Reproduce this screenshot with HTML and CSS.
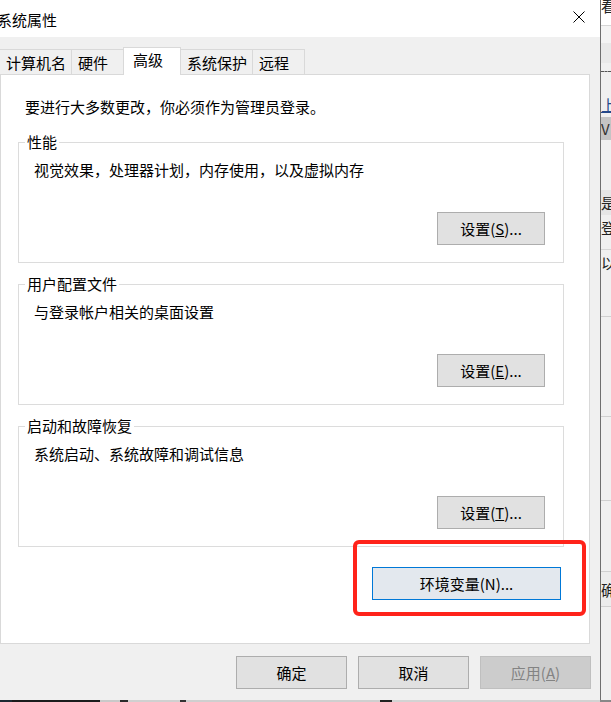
FILE: index.html
```html
<!DOCTYPE html>
<html lang="zh-CN">
<head>
    <meta charset="UTF-8">
    <meta name="viewport" content="width=device-width, initial-scale=1.0">
    <title>系统属性</title>
    <link rel="stylesheet" href="styles.css">
</head>
<body>
    <div class="screen">
        <div class="desktop">
            <div class="window">
                <!-- 标题栏 -->
                <div class="titlebar">
                    <span class="title">系统属性</span>
                    <svg class="close" viewBox="0 0 12 12" width="12" height="12">
                        <path d="M0.5 0.5 L11.5 11.5 M11.5 0.5 L0.5 11.5" stroke="#000" stroke-width="1" fill="none"/>
                    </svg>
                </div>

                <div class="dialog">
                    <!-- 选项卡 -->
                    <div class="tabs">
                        <div class="tab">计算机名</div>
                        <div class="tab">硬件</div>
                        <div class="tab active">高级</div>
                        <div class="tab">系统保护</div>
                        <div class="tab">远程</div>
                    </div>

                    <div class="panel">
                        <p class="intro">要进行大多数更改，你必须作为管理员登录。</p>

                        <fieldset class="group">
                            <legend>性能</legend>
                            <p class="desc">视觉效果，处理器计划，内存使用，以及虚拟内存</p>
                            <div class="group-actions">
                                <button class="btn">设置(<u>S</u>)...</button>
                            </div>
                        </fieldset>

                        <fieldset class="group">
                            <legend>用户配置文件</legend>
                            <p class="desc">与登录帐户相关的桌面设置</p>
                            <div class="group-actions">
                                <button class="btn">设置(<u>E</u>)...</button>
                            </div>
                        </fieldset>

                        <fieldset class="group">
                            <legend>启动和故障恢复</legend>
                            <p class="desc">系统启动、系统故障和调试信息</p>
                            <div class="group-actions">
                                <button class="btn">设置(<u>T</u>)...</button>
                            </div>
                        </fieldset>

                        <button class="btn btn-env">环境变量(N)...</button>
                    </div>

                    <!-- 底部按钮 -->
                    <div class="footer">
                        <button class="btn btn-wide">确定</button>
                        <button class="btn btn-wide">取消</button>
                        <button class="btn btn-wide btn-disabled">应用(<u>A</u>)</button>
                    </div>
                </div>

                <!-- 红色标注框 -->
                <div class="mark"></div>
            </div>

            <!-- 右侧露出的背景窗口 -->
            <div class="side">
                <div class="s-top">看</div>
                <div class="s-light"></div>
                <div class="s-grey"></div>
                <div class="s-dash"></div>
                <div class="s-link"><span>上</span></div>
                <div class="s-band">V</div>
                <div class="s-gap"></div>
                <div class="s-row s-shade">是</div>
                <div class="s-row s-line">登</div>
                <div class="s-row">以</div>
                <div class="s-gap2"></div>
                <div class="s-rule"></div>
                <div class="s-gap3"></div>
                <div class="s-rule"></div>
                <div class="s-gap4"></div>
                <div class="s-rule"></div>
                <div class="s-gap5"></div>
                <div class="s-row s-ok">确</div>
            </div>
        </div>
        <div class="taskbar"></div>
    </div>
</body>
</html>
```

FILE: styles.css
```css
* {
    box-sizing: border-box;
}

body {
    margin: 0;
    font-family: "Noto Sans CJK SC", "Noto Sans", sans-serif;
    font-size: 15px;
    line-height: 20px;
    color: #000;
    overflow: hidden;
}

p {
    margin: 0;
}

.screen {
    width: 611px;
    height: 702px;
    display: flex;
    flex-direction: column;
}

.desktop {
    display: flex;
    height: 700px;
}

.window {
    position: relative;
    width: 601px;
    height: 700px;
    background-color: #f0f0f0;
    border-right: 1px solid #6f6f6f;
    display: flex;
    flex-direction: column;
}

.titlebar {
    height: 37px;
    background-color: #fff;
    display: flex;
    justify-content: space-between;
    align-items: flex-start;
    padding-top: 10px;
}

.title {
    margin-left: -3px;
}

.close {
    margin: 1px 15px 0 0;
}

.dialog {
    padding-top: 10px;
    display: flex;
    flex-direction: column;
}

/* 选项卡 */
.tabs {
    display: flex;
    align-items: flex-end;
    height: 27px;
}

.tab {
    height: 25px;
    min-width: 52px;
    padding: 3px 5px 0 6px;
    background-color: #f0f0f0;
    border-top: 1px solid #d9d9d9;
    border-right: 1px solid #d9d9d9;
}

.tab.active {
    position: relative;
    z-index: 1;
    height: 28px;
    min-width: 58px;
    margin: 0 0 -1px -1px;
    padding: 2px 0 0 9px;
    background-color: #fff;
    border-left: 1px solid #d9d9d9;
}

.panel {
    width: 590px;
    height: 570px;
    background-color: #fff;
    border: 1px solid #d9d9d9;
    padding: 22px 25px 0 17px;
    display: flex;
    flex-direction: column;
}

.intro {
    margin-left: 7px;
}

/* 分组框 */
.group {
    margin: 15px 0 0;
    padding: 8px 18px 17px 0;
    border: 1px solid #dcdcdc;
    min-width: 0;
}

.group + .group {
    margin-top: 11px;
}

.group legend {
    margin-left: 6px;
    padding: 0 2px;
    line-height: 20px;
}

.desc {
    margin-left: 15px;
}

.group-actions {
    display: flex;
    justify-content: flex-end;
    margin-top: 32px;
}

.btn {
    width: 108px;
    height: 33px;
    padding: 0;
    font-family: inherit;
    font-size: 15px;
    line-height: 20px;
    color: #000;
    background-color: #e1e1e1;
    border: 1px solid #adadad;
}

.btn-env {
    width: 189px;
    align-self: flex-end;
    margin: 20px 3px 0 0;
    background-color: #e3e8ee;
    border-color: #0078d7;
}

.footer {
    display: flex;
    justify-content: flex-end;
    gap: 11px;
    padding: 12px 9px 0 0;
}

.btn-wide {
    width: 111px;
}

.btn-disabled {
    color: #838383;
    background-color: #cccccc;
    border-color: #bfbfbf;
}

/* 红色标注 */
.mark {
    position: absolute;
    left: 353px;
    top: 540px;
    width: 233px;
    height: 76px;
    border: 4px solid #ff231a;
    border-radius: 6px;
}

/* 右侧背景窗口 */
.side {
    width: 10px;
    background-color: #f0f0f0;
    display: flex;
    flex-direction: column;
    overflow: hidden;
    white-space: nowrap;
    color: #222;
}

.s-top {
    height: 26px;
    background-color: #fff;
    line-height: 12px;
    border-bottom: 1px solid #d6d6d6;
}

.s-light {
    height: 17px;
    background-color: #f4f4f4;
}

.s-grey {
    height: 20px;
    background-color: #e9e9e9;
}

.s-dash {
    height: 9px;
    border-bottom: 1px dashed #555;
}

.s-link {
    height: 43px;
    display: flex;
    align-items: flex-end;
    color: #24488a;
}

.s-link span {
    text-decoration: underline;
}

.s-band {
    height: 23px;
    margin-top: 2px;
    background-color: #c4c4c4;
    color: #333;
    line-height: 23px;
}

.s-gap {
    height: 50px;
}

.s-row {
    height: 25px;
    line-height: 25px;
}

.s-shade {
    background-color: #e6e6e6;
}

.s-line {
    height: 35px;
    border-bottom: 1px solid #d6d6d6;
}

.s-gap2 {
    height: 41px;
}

.s-rule {
    height: 1px;
    background-color: #d0d0d0;
}

.s-gap3 {
    height: 99px;
}

.s-gap4 {
    height: 83px;
}

.s-gap5 {
    height: 70px;
}

.s-ok {
    height: 36px;
    line-height: 36px;
    border-top: 1px solid #d0d0d0;
    border-bottom: 1px solid #d0d0d0;
    background-color: #ececec;
}

.taskbar {
    height: 2px;
    background: linear-gradient(90deg, #1c2a33 0 12px, #1b1b1b 12px 100px, #c9c9c9 100px 120px, #2a2a2a 120px 128px, #d0d0d0 128px 180px, #333 180px 186px, #cfcfcf 186px 380px, #222 380px 392px, #d3d3d3 392px 600px, #888 600px);
}
```
